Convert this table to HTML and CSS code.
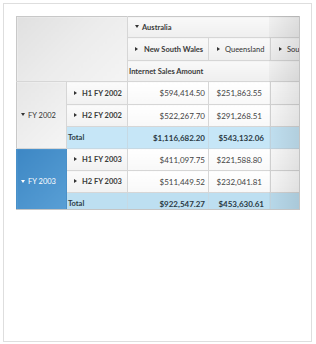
FILE: index.html
```
<!DOCTYPE html>
<html>
<head>
<meta charset="utf-8">
<link rel="stylesheet" href="styles.css">
</head>
<body>
<div class="card">
  <div class="pivot">
    <table class="pt">
      <colgroup>
        <col class="c1"><col class="c2"><col class="c3"><col class="c4"><col class="c5">
      </colgroup>
      <tr class="rh1">
        <td class="corner" colspan="2" rowspan="3"></td>
        <td class="hdr" colspan="3"><span class="tri down"></span>Australia</td>
      </tr>
      <tr class="rh2">
        <td class="hdr strong"><span class="tri right"></span>New South Wales</td>
        <td class="hdr light"><span class="tri right"></span>Queensland</td>
        <td class="hdr light"><span class="tri right"></span>South Australia</td>
      </tr>
      <tr class="rh3">
        <td class="hdr measure" colspan="3">Internet Sales Amount</td>
      </tr>
      <tr class="rd first">
        <td class="year" rowspan="3"><span class="tri down"></span>FY 2002</td>
        <td class="half"><span class="tri right"></span>H1 FY 2002</td>
        <td class="val v3">$594,414.50</td>
        <td class="val v4">$251,863.55</td>
        <td class="val v5"></td>
      </tr>
      <tr class="rd">
        <td class="half"><span class="tri right"></span>H2 FY 2002</td>
        <td class="val v3">$522,267.70</td>
        <td class="val v4">$291,268.51</td>
        <td class="val v5"></td>
      </tr>
      <tr class="rd total">
        <td class="tlabel">Total</td>
        <td class="val v3">$1,116,682.20</td>
        <td class="val v4">$543,132.06</td>
        <td class="val v5"></td>
      </tr>
      <tr class="rd">
        <td class="year sel" rowspan="3"><span class="tri down"></span>FY 2003</td>
        <td class="half"><span class="tri right"></span>H1 FY 2003</td>
        <td class="val v3">$411,097.75</td>
        <td class="val v4">$221,588.80</td>
        <td class="val v5"></td>
      </tr>
      <tr class="rd">
        <td class="half"><span class="tri right"></span>H2 FY 2003</td>
        <td class="val v3">$511,449.52</td>
        <td class="val v4">$232,041.81</td>
        <td class="val v5"></td>
      </tr>
      <tr class="rd total total2">
        <td class="tlabel">Total</td>
        <td class="val v3">$922,547.27</td>
        <td class="val v4">$453,630.61</td>
        <td class="val v5"></td>
      </tr>
    </table>
  </div>
</div>
</body>
</html>
```
FILE: styles.css
```
html, body {
  margin: 0;
  padding: 0;
  background: #ffffff;
}

.card {
  margin: 3px;
  width: 309px;
  height: 339px;
  box-sizing: border-box;
  border: 1px solid #dedede;
  padding: 12px;
  font-family: Lato, "Open Sans", sans-serif;
  color: #333333;
}

.pivot {
  position: relative;
  width: 284px;
  height: 194px;
  overflow: hidden;
  box-sizing: border-box;
  border-right: 1px solid #c4c4c4;
  border-bottom: 1px solid #c4c4c4;
}

.pivot::after {
  content: "";
  position: absolute;
  top: 0;
  right: 0;
  width: 30px;
  height: 100%;
  background: linear-gradient(to right, rgba(0,0,0,0.03), rgba(0,0,0,0.10));
  pointer-events: none;
}

.pt {
  border-collapse: collapse;
  table-layout: fixed;
  width: 334px;
  font-size: 7.5px;
}

.c1 { width: 50px; }
.c2 { width: 61px; }
.c3 { width: 81px; }
.c4 { width: 62px; }
.c5 { width: 80px; }

.pt td {
  border: 1px solid #d6d6d6;
  padding: 0;
  white-space: nowrap;
  overflow: hidden;
  vertical-align: middle;
}

.rh1 td { height: 20px; }
.rh2 td { height: 22px; }
.rh3 td { height: 20px; }
.rd td { height: 21px; }
.rd.first td { height: 22px; }

.corner {
  background: linear-gradient(135deg, #e0e0e0 0%, #ececec 50%, #f4f4f4 100%);
  border-left-color: #c8c8c8 !important;
  border-top-color: #c8c8c8 !important;
}

.hdr {
  background: linear-gradient(to bottom, #f9f9f9, #efefef);
  font-weight: 700;
  color: #3a3a3a;
  padding-left: 7px !important;
  border-top-color: #c8c8c8 !important;
}

.hdr.light { font-weight: 400; color: #333333; padding-left: 8px !important; }
.hdr.measure { padding-left: 1px !important; }

.tri {
  display: inline-block;
  width: 0;
  height: 0;
  vertical-align: middle;
  position: relative;
  top: -1px;
}

.tri.right {
  border-top: 2px solid transparent;
  border-bottom: 2px solid transparent;
  border-left: 3px solid #333333;
  margin-right: 5px;
}

.tri.down {
  border-left: 2px solid transparent;
  border-right: 2px solid transparent;
  border-top: 3px solid #333333;
  margin-right: 3px;
}

.hdr.strong .tri.right { margin-right: 6px; }

.year {
  background: linear-gradient(135deg, #e6e6e6, #f5f5f5);
  font-weight: 400;
  padding-left: 4px !important;
  border-left-color: #c8c8c8 !important;
}

.year.sel {
  background: linear-gradient(135deg, #3d87c4, #5aa0d6);
  color: #ffffff;
  border-color: #4a90c8 !important;
}

.year.sel .tri.down { border-top-color: #ffffff; }

.half {
  background: linear-gradient(to bottom, #fbfbfb, #f1f1f1);
  font-weight: 700;
  color: #3a3a3a;
  padding-left: 7px !important;
}

.tlabel {
  font-weight: 700;
  padding-left: 1px !important;
}

.val {
  text-align: right;
  background: linear-gradient(to bottom, #ffffff, #f8f8f8);
  color: #444444;
  font-size: 8px;
}

.v3 { padding-right: 3px !important; }
.v4 { padding-right: 8px !important; }
.v5 { padding-right: 6px !important; }

.total td {
  background: #c6e6f7;
  font-weight: 700;
  color: #2b3a44;
  border-color: #c6d9e4;
}

.total .v4 { padding-right: 6px !important; }

.total2 td { background: #bddff1; }
```
